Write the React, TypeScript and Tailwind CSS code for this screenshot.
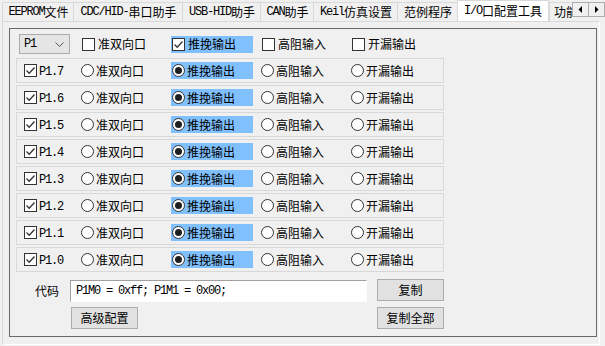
import React from 'react';

const tabs = [
  { label: 'EEPROM文件', w: 'w-[71px]' },
  { label: 'CDC/HID-串口助手', w: 'w-[109px]' },
  { label: 'USB-HID助手', w: 'w-[78px]' },
  { label: 'CAN助手', w: 'w-[53px]' },
  { label: 'Keil仿真设置', w: 'w-[84px]' },
  { label: '范例程序', w: 'w-[60px]' },
  { label: 'I/O口配置工具', w: 'w-[92px]' },
  { label: '功能', w: 'w-[60px]' },
];
const activeTab = 6;
const pins = ['P1.7', 'P1.6', 'P1.5', 'P1.4', 'P1.3', 'P1.2', 'P1.1', 'P1.0'];
const modes = ['准双向口', '推挽输出', '高阻输入', '开漏输出'];

// ascii runs get the narrow mono face, CJK stays on Noto
const Mixed: React.FC<{ text: string }> = ({ text }) => (
  <>
    {text
      .split(/([\x20-\x7e]+)/)
      .filter(Boolean)
      .map((part, i) =>
        /^[\x20-\x7e]+$/.test(part) ? (
          <span key={i} className="[font-family:'Liberation_Mono',monospace] tracking-[-1.2px] whitespace-pre">
            {part}
          </span>
        ) : (
          <span key={i}>{part}</span>
        )
      )}
  </>
);

const CheckBox: React.FC<{ checked?: boolean }> = ({ checked }) => (
  <div className="w-[13px] h-[13px] border border-[#333333] bg-white flex items-center justify-center shrink-0">
    {checked && (
      <svg width="11" height="11" viewBox="0 0 11 11">
        <path d="M1.5 5.5 L4.2 8.2 L9.5 2.5" fill="none" stroke="#333333" strokeWidth="1.3" />
      </svg>
    )}
  </div>
);

const Radio: React.FC<{ checked?: boolean }> = ({ checked }) => (
  <div className="w-[13px] h-[13px] rounded-full border border-[#333333] bg-white flex items-center justify-center shrink-0">
    {checked && <div className="w-[7px] h-[7px] rounded-full bg-[#1f1f1f]" />}
  </div>
);

const Button: React.FC<{ label: string; className?: string }> = ({ label, className }) => (
  <div className={`h-[22px] w-[67px] bg-[#e1e1e1] border border-[#adadad] flex items-center justify-center ${className ?? ''}`}>
    {label}
  </div>
);

const App: React.FC = () => {
  return (
    <div className="w-[605px] h-[346px] bg-[#f0f0f0] overflow-hidden text-[12px] leading-none text-black [font-family:'Noto_Sans_CJK_SC',sans-serif]">
      {/* Tab strip */}
      <div className="h-[21px] flex pl-[2px]">
        <div className="w-[570px] h-full flex items-end overflow-hidden">
          {tabs.map((tab, i) =>
            i === activeTab ? (
              <div
                key={tab.label}
                className={`${tab.w} relative z-10 h-[23px] -mb-[2px] pb-[3px] bg-white border border-b-0 border-[#d9d9d9] flex items-center justify-center shrink-0`}
              >
                <Mixed text={tab.label} />
              </div>
            ) : (
              <div
                key={tab.label}
                className={`${tab.w} h-[19px] pl-[1px] bg-[#f0f0f0] border border-b-0 border-r-0 border-[#d9d9d9] flex items-center ${i === tabs.length - 1 ? 'justify-start pl-[4px]' : 'justify-center'} shrink-0`}
              >
                <Mixed text={tab.label} />
              </div>
            )
          )}
        </div>
        <div className="flex pt-[2px]">
          <div className="w-[17px] h-[15px] bg-[#f0f0f0] border border-[#adadad] flex items-center justify-center">
            <svg width="5" height="7" viewBox="0 0 5 7">
              <path d="M4 0 L0.5 3.5 L4 7 Z" fill="#000" />
            </svg>
          </div>
          <div className="w-[16px] h-[15px] bg-[#f0f0f0] border border-l-0 border-[#adadad] flex items-center justify-center">
            <svg width="5" height="7" viewBox="0 0 5 7">
              <path d="M1 0 L4.5 3.5 L1 7 Z" fill="#000" />
            </svg>
          </div>
        </div>
      </div>

      {/* Tab page */}
      <div className="ml-[2px] w-[598px] h-[324px] border border-[#d9d9d9] border-r-white border-b-white pt-[6px] pl-[6px]">
        <div className="w-[588px] h-[309px] border border-[#696969] pl-[6px] pt-[5px]">
          {/* Header */}
          <div className="h-[20px] flex items-center">
            <div className="w-[65px] pl-[3px] shrink-0">
              <div className="w-[51px] h-[20px] bg-[#e5e5e5] border border-[#acacac] flex items-center justify-between pl-[4px] pr-[5px]">
                <Mixed text="P1" />
                <svg width="9" height="5" viewBox="0 0 9 5">
                  <path d="M0.5 0.5 L4.5 4.5 L8.5 0.5" fill="none" stroke="#555" strokeWidth="1" />
                </svg>
              </div>
            </div>
            {modes.map((m, i) =>
              i === 1 ? (
                <div key={m} className="w-[90px] shrink-0">
                  <div className="w-[82px] h-[17px] bg-[#80c0ff] flex items-center pl-[1px]">
                    <CheckBox checked />
                    <span className="ml-[3px]">{m}</span>
                  </div>
                </div>
              ) : (
                <div key={m} className="w-[90px] shrink-0 flex items-center pl-[1px]">
                  <CheckBox />
                  <span className="ml-[3px]">{m}</span>
                </div>
              )
            )}
          </div>

          {/* Pin rows */}
          <div className="mt-[4px]">
            {pins.map((pin) => (
              <div key={pin} className="w-[428px] h-[25px] mb-[2px] border border-[#d8d8d8] flex items-center">
                <div className="w-[64px] pl-[7px] flex items-center shrink-0">
                  <CheckBox checked />
                  <span className="ml-[2px] mt-[1px]">
                    <Mixed text={pin} />
                  </span>
                </div>
                {modes.map((m, i) =>
                  i === 1 ? (
                    <div key={m} className="w-[90px] shrink-0">
                      <div className="w-[82px] h-[17px] bg-[#80c0ff] flex items-center pl-[1px]">
                        <Radio checked />
                        <span className="ml-[2px]">{m}</span>
                      </div>
                    </div>
                  ) : (
                    <div key={m} className="w-[90px] shrink-0 flex items-center">
                      <Radio />
                      <span className="ml-[2px]">{m}</span>
                    </div>
                  )
                )}
              </div>
            ))}
          </div>

          {/* Code */}
          <div className="mt-[7px] flex items-start">
            <div className="w-[54px] h-[23px] flex items-center justify-end pr-[11px]">代码</div>
            <div className="mt-[1px] w-[297px] h-[22px] bg-white border border-[#a0a0a0] border-r-white border-b-white flex items-center pl-[5px]">
              <Mixed text="P1M0 = 0xff; P1M1 = 0x00;" />
            </div>
            <Button label="复制" className="ml-[10px]" />
          </div>
          <div className="mt-[5px] flex">
            <Button label="高级配置" className="ml-[55px]" />
            <Button label="复制全部" className="ml-[239px]" />
          </div>
        </div>
      </div>
    </div>
  );
};

export default App;
